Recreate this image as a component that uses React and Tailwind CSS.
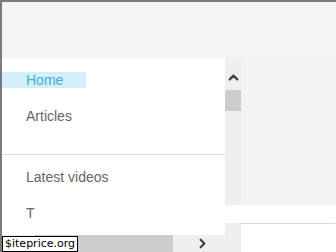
import { ChevronUp, ChevronRight } from 'lucide-react'

const font = { fontFamily: '"Liberation Sans", Arial, sans-serif' }

function MenuItem({ label, active, className = '' }) {
  return (
    <div
      className={`h-4 w-[84px] pl-6 text-[14px] leading-4 whitespace-nowrap ${
        active ? 'bg-[#d3effa] text-[#3eb0dc]' : 'text-[#666]'
      } ${className}`}
    >
      {label}
    </div>
  )
}

export default function App() {
  return (
    <div
      className="relative w-[336px] h-[252px] overflow-hidden border-l-2 border-t-2 border-[#7b7b7b] bg-[#f4f4f4] flex flex-col"
      style={font}
    >
      <div className="h-[56px] shrink-0" />
      <div className="flex flex-1 min-h-0">
        <div className="w-[239px] flex flex-col">
          <div className="flex h-[177px]">
            <div className="w-[223px] bg-white overflow-hidden flex flex-col pt-[14px]">
              <MenuItem label="Home" active />
              <MenuItem label="Articles" className="mt-5" />
              <div className="mt-[30px] h-px bg-[#dcdcdc] shrink-0" />
              <MenuItem label="Latest videos" className="mt-[14px]" />
              <MenuItem label="T" className="mt-5" />
            </div>
            <div className="w-4 flex flex-col">
              <div className="h-[147px] bg-[#efefef] flex flex-col items-center">
                <ChevronUp className="mt-[12px] w-[15px] h-[15px] text-[#3f3f3f]" strokeWidth={3.5} />
                <div className="mt-[5px] w-4 h-[21px] bg-[#cdcdcd]" />
              </div>
              <div className="h-[18px] bg-white" />
              <div className="flex-1 bg-[#efefef]" />
            </div>
          </div>
          <div className="flex-1 flex bg-[#efefef]">
            <div className="w-[33px]" />
            <div className="w-[138px] bg-[#cdcdcd]" />
            <div className="flex-1 flex items-center pl-[22px]">
              <ChevronRight className="w-[15px] h-[15px] text-[#3f3f3f]" strokeWidth={3.5} />
            </div>
          </div>
        </div>
        <div className="flex-1 flex flex-col">
          <div className="h-[147px] bg-[#f3f3f3]" />
          <div className="h-[18px] bg-white" />
          <div className="h-px bg-[#d9d9d9] mr-px" />
          <div className="flex-1 bg-white" />
        </div>
      </div>
      <div
        className="absolute left-0 bottom-0 border border-black bg-white px-[2px] text-[11px] leading-[14px] text-black"
        style={{ fontFamily: '"DejaVu Sans", Verdana, sans-serif' }}
      >
        $iteprice.org
      </div>
    </div>
  )
}
